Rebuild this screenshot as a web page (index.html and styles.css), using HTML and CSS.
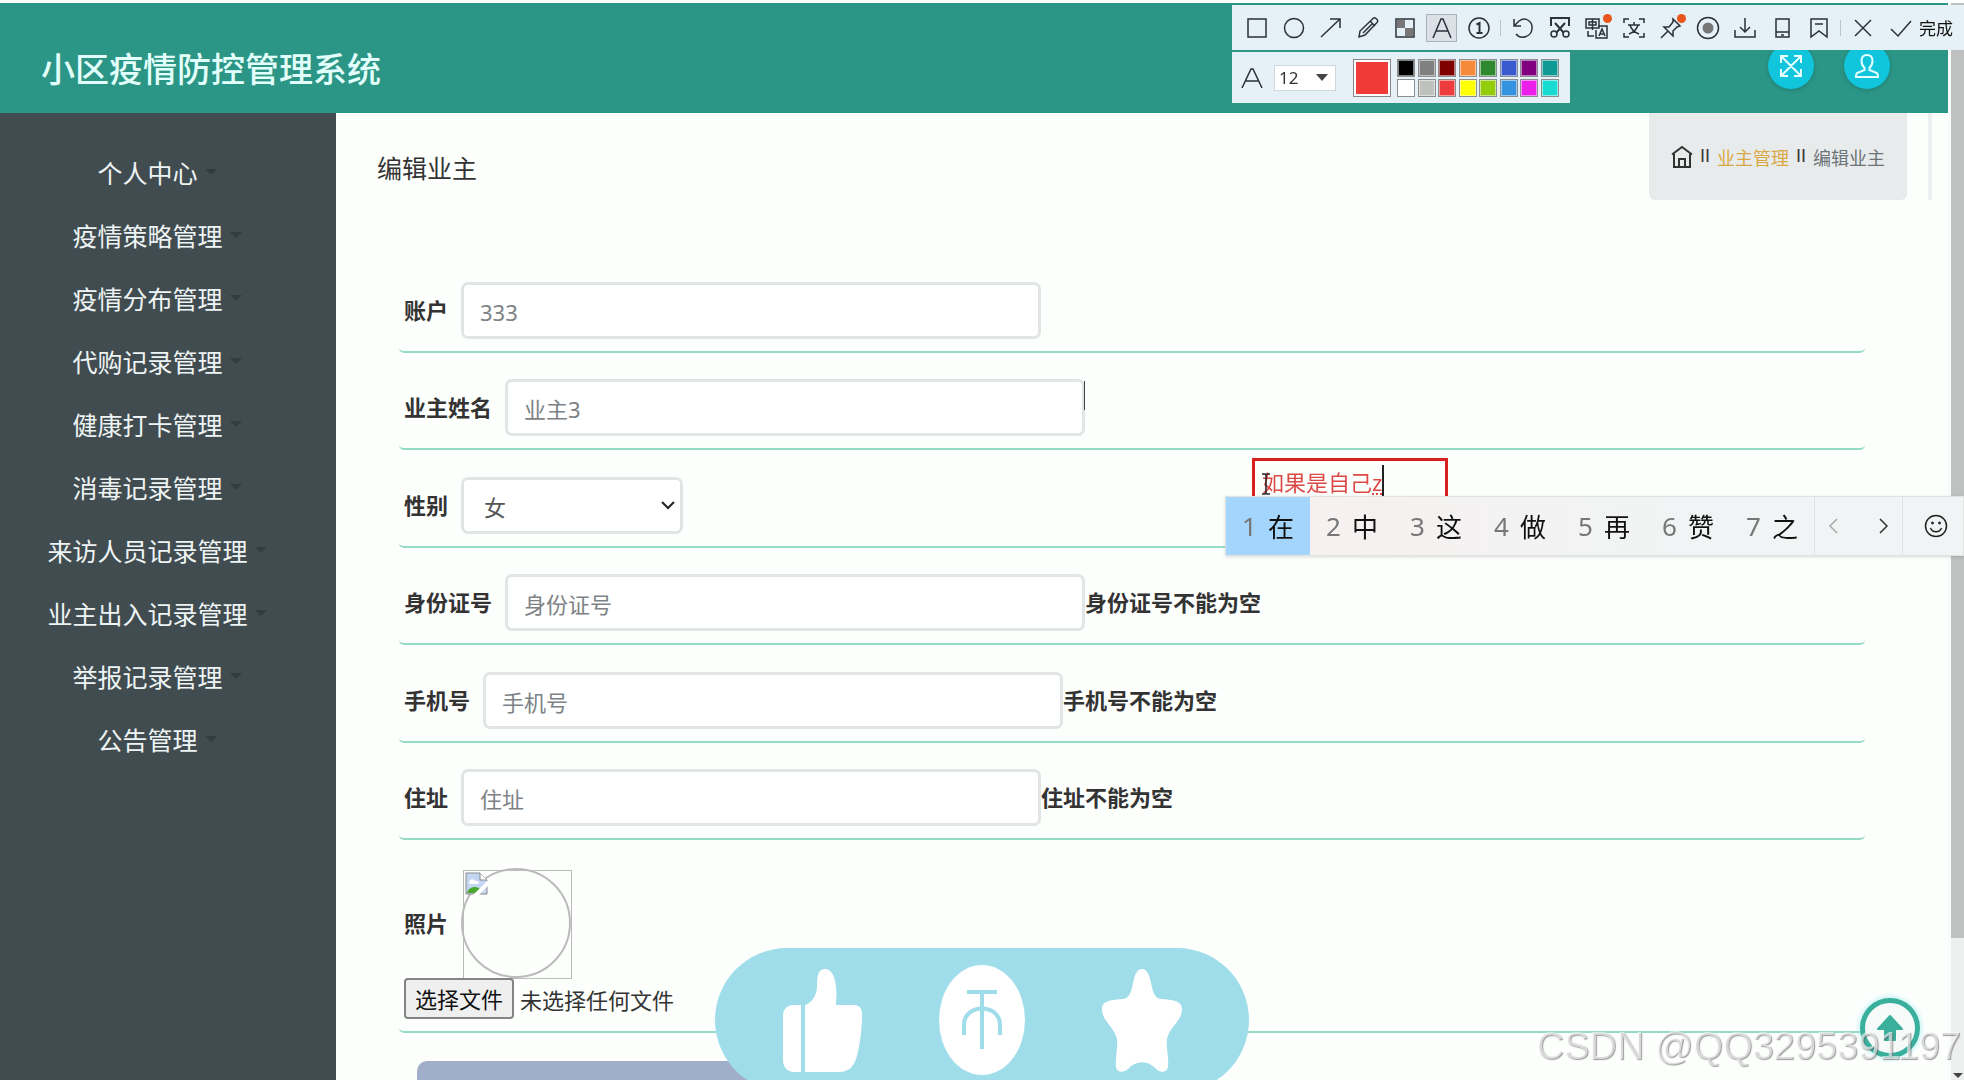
FILE: index.html
```html
<!DOCTYPE html>
<html lang="zh-CN">
<head>
<meta charset="utf-8">
<title>小区疫情防控管理系统</title>
<link rel="stylesheet" href="styles.css">
</head>
<body>
<div class="window">
  <div class="page">
    <header class="header">
      <h1 class="brand">小区疫情防控管理系统</h1>
      <div class="header-actions">
        <button class="round-btn" aria-label="全屏">
          <svg width="24" height="24" viewBox="0 0 24 24" fill="none" stroke="#e6ffff" stroke-width="2"><path d="M3 3l18 18M21 3L3 21M2 9V2h7M15 2h7v7M22 15v7h-7M9 22H2v-7"/></svg>
        </button>
        <button class="round-btn" aria-label="用户">
          <svg width="26" height="26" viewBox="0 0 26 26" fill="none" stroke="#e6ffff" stroke-width="2"><path d="M13 2c-4 0-5.500 3-5.500 6 0 3 1 5 3 7v2L3 20c-1 1-1 2-1 4h22c0-2 0-3-1-4l-7.500-3v-2c2-2 3-4 3-7 0-3-1.500-6-5.500-6z"/></svg>
        </button>
      </div>
    </header>
    <div class="body">
      <nav class="sidebar">
        <a class="nav-item" href="#">个人中心</a>
        <a class="nav-item" href="#">疫情策略管理</a>
        <a class="nav-item" href="#">疫情分布管理</a>
        <a class="nav-item" href="#">代购记录管理</a>
        <a class="nav-item" href="#">健康打卡管理</a>
        <a class="nav-item" href="#">消毒记录管理</a>
        <a class="nav-item" href="#">来访人员记录管理</a>
        <a class="nav-item" href="#">业主出入记录管理</a>
        <a class="nav-item" href="#">举报记录管理</a>
        <a class="nav-item" href="#">公告管理</a>
      </nav>
      <main class="main">
        <div class="title-bar">
          <h2 class="page-title">编辑业主</h2>
          <div class="crumb-wrap">
            <div class="crumbs">
              <svg width="22" height="24" viewBox="0 0 22 24" fill="none" stroke="#333" stroke-width="2"><path d="M1 9.500L11 2l10 7.500M3 9v13h16V9M8 22v-8h6v8"/></svg>
              <span class="crumb-sep">II</span><a class="crumb-link" href="#">业主管理</a><span class="crumb-sep">II</span><span class="crumb-now">编辑业主</span>
            </div>
          </div>
        </div>
        <form class="form">
          <div class="row"><label for="account">账户</label><input class="field" id="account" type="text" placeholder="333"></div>
          <div class="row"><label for="name">业主姓名</label><input class="field" id="name" type="text" placeholder="业主3"></div>
          <div class="row"><label for="sex">性别</label>
            <span class="select-wrap"><select class="field field-select" id="sex"><option>女</option><option>男</option></select>
            <svg width="14" height="10" viewBox="0 0 14 10" fill="none" stroke="#222" stroke-width="2"><path d="M1 1l6 6 6-6"/></svg></span></div>
          <div class="row"><label for="idno">身份证号</label><input class="field" id="idno" type="text" placeholder="身份证号"><span class="error">身份证号不能为空</span></div>
          <div class="row"><label for="phone">手机号</label><input class="field" id="phone" type="text" placeholder="手机号"><span class="error">手机号不能为空</span></div>
          <div class="row"><label for="addr">住址</label><input class="field" id="addr" type="text" placeholder="住址"><span class="error">住址不能为空</span></div>
          <div class="row row-photo">
            <div class="photo-line"><label for="photo">照片</label>
              <svg class="photo" width="112" height="112" viewBox="0 0 112 112" fill="none">
                <rect x="2.500" y="2.500" width="108" height="108" stroke="#bbb"/>
                <circle cx="55" cy="55" r="54" stroke="#bbb" stroke-width="2"/>
                <path d="M5 5h14l7 7v14H5z" fill="#c3d6f2" stroke="#888"/>
                <path d="M19 5v7h7" fill="#fff" stroke="#888"/>
                <path d="M8 15c0-4 4-5 6-2 3-1 5 2 3 3H9z" fill="#fff"/>
                <path d="M6 25c2-7 11-8 15-2l-1 2z" fill="#49a82e"/>
                <path d="M14 28L28 14" stroke="#fff" stroke-width="4"/>
              </svg></div>
            <div class="file-line"><button class="file-btn" type="button">选择文件</button><span>未选择任何文件</span><input id="photo" type="file" hidden></div>
          </div>
          <button class="submit" type="button" aria-label="提交"></button>
        </form>
      </main>
    </div>
  </div>
  <div class="scrollbar"><div class="thumb"></div><div class="track"><i class="scroll-down"></i></div></div>
</div>

<i class="text-caret"></i>

<div class="snip">
  <div class="tools">
    <button aria-label="矩形"><svg viewBox="0 0 24 24"><rect x="3" y="3" width="18" height="18"/></svg></button>
    <button aria-label="椭圆"><svg viewBox="0 0 24 24"><circle cx="12" cy="12" r="9.500"/></svg></button>
    <button aria-label="箭头"><svg viewBox="0 0 24 24"><path d="M2 21L21 3M11 3h10v9"/></svg></button>
    <button aria-label="画笔"><svg viewBox="0 0 24 24"><path d="M3 21l1-6L17 2.500c1-1 2-1 3 0l1 1c1 1 1 2 0 3L9 19zM14 5l5 5M7 17L17 7"/></svg></button>
    <button aria-label="马赛克"><svg viewBox="0 0 24 24"><rect x="3" y="3" width="18" height="18"/><path d="M4 4h8v8H4zM12 12h8v8h-8z" fill="#777" stroke="none"/></svg></button>
    <button class="active" aria-label="文字"><svg viewBox="0 0 24 24"><path d="M3 22L11 3h2l8 19M6 15h12"/></svg></button>
    <button aria-label="序号"><svg viewBox="0 0 24 24"><circle cx="12" cy="12" r="10"/><path d="M9.500 8.500L12.500 7v10M9.500 17h6" stroke-width="2"/></svg></button>
    <i class="sep"></i>
    <button aria-label="撤销"><svg viewBox="0 0 24 24"><path d="M3 3v7h7M3 10l5-5c7-5 14 1 13 8-1 8-11 11-16 5"/></svg></button>
    <button aria-label="裁剪"><svg viewBox="0 0 24 24"><path d="M3 10V2h18v8M7 7l9 10M17 7L8 17" stroke-width="2"/><circle cx="6" cy="18" r="3"/><circle cx="18" cy="18" r="3"/></svg></button>
    <button aria-label="翻译"><svg viewBox="0 0 24 24"><path d="M1 3h13v9H1zM4 6h7v3H4zM7.500 3v11M3 15v5h6M13 10h9v12H11v-8M14 20l3-7 3 7M15 18h4"/></svg><i class="dot"></i></button>
    <button aria-label="识字"><svg viewBox="0 0 24 24"><path d="M2 7V3h5M17 3h5v4M22 17v4h-5M7 21H2v-4M6 9h12M12 6v3M8 9c1 4 4 7 9 9M16 9c-1 4-4 7-9 9"/></svg></button>
    <button aria-label="固定"><svg viewBox="0 0 24 24"><path d="M14 3l7 7-3 1-4 4v5L5 11h5l4-5zM9 15l-7 7M5 11l9 9"/></svg><i class="dot"></i></button>
    <button aria-label="录制"><svg viewBox="0 0 24 24"><circle cx="12" cy="12" r="10.500"/><circle cx="12" cy="12" r="5.500" fill="#777" stroke="none"/></svg></button>
    <button aria-label="下载"><svg viewBox="0 0 24 24"><path d="M12 2v14M7 11l5 5 5-5M2 14v7h20v-7"/></svg></button>
    <button aria-label="手机"><svg viewBox="0 0 24 24"><path d="M6 3h13v18H6zM6 16h13M11 19h3"/></svg></button>
    <button aria-label="收藏"><svg viewBox="0 0 24 24"><path d="M4 3h16v18l-8-6-8 6zM8 8h8"/></svg></button>
    <i class="sep"></i>
    <button aria-label="关闭"><svg viewBox="0 0 24 24"><path d="M4 4l16 16M20 4L4 20"/></svg></button>
    <button class="done"><svg viewBox="0 0 24 24"><path d="M2 13l7 7L22 5"/></svg><span>完成</span></button>
  </div>
  <div class="options">
    <svg class="letter" width="24" height="24" viewBox="0 0 24 24"><path d="M2 22L11 3h2l9 19M6 15h12"/></svg>
    <span class="size-wrap"><select class="size" aria-label="字号"><option>12</option><option>14</option></select><i class="size-arrow"></i></span>
    <i class="current"></i>
    <div class="palette">
      <i class="sw black"></i><i class="sw grey"></i><i class="sw maroon"></i><i class="sw orange"></i><i class="sw green"></i><i class="sw blue"></i><i class="sw purple"></i><i class="sw teal"></i>
      <i class="sw white"></i><i class="sw silver"></i><i class="sw red"></i><i class="sw yellow"></i><i class="sw lime"></i><i class="sw sky"></i><i class="sw pink"></i><i class="sw cyan"></i>
    </div>
  </div>
</div>

<div class="note"><span class="note-text">如果是自己<u>z</u></span>
  <svg class="ibeam" width="10" height="24" viewBox="0 0 10 24" fill="none" stroke="#222" stroke-width="1.500"><path d="M1 2h3l1 1 1-1h3M5 3v18M1 22h3l1-1 1 1h3"/></svg>
</div>

<div class="ime">
  <button class="cand chosen"><span>1</span>在</button>
  <button class="cand"><span>2</span>中</button>
  <button class="cand"><span>3</span>这</button>
  <button class="cand"><span>4</span>做</button>
  <button class="cand"><span>5</span>再</button>
  <button class="cand"><span>6</span>赞</button>
  <button class="cand"><span>7</span>之</button>
  <div class="pager">
    <button aria-label="上一页"><svg width="10" height="16" viewBox="0 0 10 16" fill="none" stroke="#aaa" stroke-width="1.500"><path d="M9 1L2 8l7 7"/></svg></button>
    <button aria-label="下一页"><svg width="10" height="16" viewBox="0 0 10 16" fill="none" stroke="#333" stroke-width="1.500"><path d="M1 1l7 7-7 7"/></svg></button>
  </div>
  <button class="emoji" aria-label="表情"><svg width="24" height="24" viewBox="0 0 24 24" fill="none" stroke="#222" stroke-width="1.500"><circle cx="12" cy="12" r="10.500"/><path d="M6.500 14c2 5 9 5 11 0"/><circle cx="8.500" cy="9" r="1" fill="#222" stroke-width="1"/><circle cx="15.500" cy="9" r="1" fill="#222" stroke-width="1"/></svg></button>
</div>

<div class="dock">
  <div class="pill">
    <svg width="80" height="104" viewBox="0 0 80 104" fill="#fff"><path d="M19 37v67H12C5 104 1 99 1 92V48C1 41 5 37 12 37zM23 104V37c8-3 12-11 12-19C35 6 37 1 43 1s10 7 11 17c1 7 0 12 0 19h17c6 0 9 3 9 9 0 15-2 30-5 42-3 11-9 16-17 16z"/></svg>
    <svg width="86" height="110" viewBox="0 0 86 110"><ellipse cx="43" cy="55" rx="43" ry="55" fill="#fff"/><path d="M28 27h30M43 27v57M25 70V60c0-22 36-22 36 0v10" fill="none" stroke="#9fddeb" stroke-width="4"/></svg>
    <svg width="80" height="104" viewBox="0 0 80 104" fill="#fff"><path d="M40 1c5 0 7 5 9 14 2 10 4 16 11 16 9 1 20 1 20 10 0 12-12 17-15 30-1 9 2 19 1 28-1 6-8 6-12 2-8-9-20-9-28 0-4 4-11 4-12-2-1-9 2-19 1-28C12 58 0 53 0 41c0-9 11-9 20-10 7 0 9-6 11-16 2-9 4-14 9-14z"/></svg>
  </div>
</div>

<button class="to-top" aria-label="返回顶部"><svg width="28" height="28" viewBox="0 0 28 28" fill="#3aaf9c" stroke="#3aaf9c" stroke-width="2" stroke-linejoin="round"><path d="M14 2L26 15h-7v11H9V15H2z"/></svg></button>
<div class="watermark">CSDN @QQ3295391197</div>
</body>
</html>
```
FILE: styles.css
```css
* { box-sizing: border-box; }
body { margin: 0; height: 100vh; overflow: hidden; background: #fdfffd; color: #333; font-family: "Noto Sans", "Noto Sans CJK SC", sans-serif; font-size: 22px; }
button { border: 0; padding: 0; background: none; font: inherit; color: inherit; display: flex; align-items: center; justify-content: center; }
a { text-decoration: none; }

.window { display: flex; height: 100vh; padding-top: 3px; overflow: hidden; }
.page { flex: 1; display: flex; flex-direction: column; min-width: 0; overflow: hidden; }

.header { flex: none; height: 110px; padding: 16px 58px 0 41px; display: flex; align-items: center; justify-content: space-between; background: #2c9686; }
.brand { margin: 0; padding-top: 6px; font-size: 34px; font-weight: 500; line-height: 48px; color: #e2fffb; }
.header-actions { display: flex; gap: 30px; }
.round-btn { width: 46px; height: 46px; border-radius: 50%; background: #10c5dc; box-shadow: 0 1px 4px rgba(0, 60, 60, .3); }

.body { flex: 1; display: flex; min-height: 0; }
.sidebar { flex: none; width: 336px; padding: 27px 22px 0 0; display: flex; flex-direction: column; align-items: center; background: #414c50; }
.nav-item { display: flex; align-items: center; gap: 7px; height: 63px; font-size: 25px; color: #eef4f4; white-space: nowrap; }
.nav-item::after { content: ""; border: 6px solid transparent; border-top-color: #313d40; border-bottom: 0; }

.main { flex: 1; min-width: 0; }
.title-bar { display: flex; justify-content: space-between; padding-left: 41px; }
.page-title { margin: 37px 0 0; font-size: 25px; font-weight: 400; line-height: 36px; }
.crumb-wrap { padding-right: 21px; margin-right: 16px; border-right: 4px solid #eceef0; }
.crumbs { display: flex; align-items: center; gap: 7px; width: 258px; height: 87px; padding-left: 22px; border-radius: 0 0 6px 6px; background: #e8ebec; font-size: 18px; white-space: nowrap; }
.crumb-sep { font-family: "Liberation Sans", sans-serif; }
.crumb-link { color: #d9a843; }
.crumb-now { color: #6c7478; }

.form { margin: 55px 83px 0 63px; }
.row { display: flex; align-items: center; padding: 27px 5px 12px; border-bottom: 2px solid #94dcc6; border-radius: 5px; white-space: nowrap; }
.row:nth-child(even) { padding-top: 26px; }
.row label { margin-right: 13px; padding-bottom: 3px; font-weight: 700; }
.error { padding-bottom: 3px; font-weight: 700; }
.field { width: 580px; height: 57px; padding: 2px 16px 0; border: 3px solid #e1e5e5; border-radius: 7px; background: #fefffe; font: inherit; color: #555; outline: 0; }
.field::placeholder { color: #7d8286; opacity: 1; }
.select-wrap { display: grid; align-items: center; }
.select-wrap > * { grid-area: 1 / 1; }
.select-wrap svg { justify-self: end; margin-right: 8px; pointer-events: none; }
.field-select { width: 222px; padding-left: 20px; appearance: none; }
.row-photo { display: block; padding-top: 28px; }
.photo-line { display: flex; align-items: center; }
.photo { margin-bottom: -2px; }
.file-line { display: flex; align-items: center; gap: 6px; }
.file-btn { width: 110px; height: 41px; padding-bottom: 2px; border: 2px solid #848484; border-radius: 4px; background: #efefef; color: #111; }
.submit { width: 600px; height: 60px; margin: 28px 0 0 18px; border-radius: 10px; background: #a0aec9; }

.scrollbar { flex: none; width: 16px; display: flex; flex-direction: column; border-left: 3px solid #fafbfb; background: #eeefef; }
.thumb { flex: 87; background: #bfc1c0; }
.track { flex: 13; display: flex; align-items: flex-end; justify-content: center; padding-bottom: 2px; }
.scroll-down { border: 5px solid transparent; border-top-color: #444; border-bottom: 0; }

/* screen-capture toolbar floating over the page */
.snip { position: fixed; top: 5px; right: 0; width: 732px; }
.tools { display: flex; align-items: center; height: 45px; padding-left: 6px; background: #e6f0f7; }
.tools button { flex: none; position: relative; width: 37px; height: 28px; }
.tools svg, .letter { flex: none; width: 24px; height: 24px; fill: none; stroke: #2a3138; stroke-width: 1.5; }
.tools .active { width: 31px; margin: 0 3px; border: 1px solid #a9b2ba; background: #dbe1e6; }
.tools .done { width: auto; padding-left: 8px; gap: 6px; font-size: 17px; color: #111; }
.sep { flex: none; width: 1px; height: 16px; margin: 0 3px; background: #b9c3cb; }
.dot { position: absolute; top: 0; right: 3px; width: 9px; height: 9px; border-radius: 50%; background: #e8561e; }
.options { display: flex; align-items: center; width: 338px; height: 51px; margin-top: 2px; padding-left: 8px; background: #e6f0f7; }
.size-wrap { display: grid; align-items: center; margin: 0 17px 0 10px; }
.size-wrap > * { grid-area: 1 / 1; }
.size { width: 62px; height: 26px; padding: 0 4px; border: 1px solid #cfd8de; background: #fff; appearance: none; font: inherit; font-size: 17px; line-height: 22px; color: #333; }
.size-arrow { justify-self: end; margin-right: 8px; border: 6px solid transparent; border-top: 7px solid #444; border-bottom: 0; pointer-events: none; }
.current { width: 38px; height: 38px; border: 1px solid #888; box-shadow: inset 0 0 0 2px #fff; background: #f03a37; }
.palette { display: grid; grid-template-columns: repeat(8, 18px); justify-content: space-between; row-gap: 2px; width: 162px; margin-left: 6px; }
.sw { height: 18px; border: 1px solid #8b8f92; box-shadow: inset 0 0 0 1px rgba(255, 255, 255, .5); }
.black { background: #000; } .grey { background: #808080; } .maroon { background: #800000; } .orange { background: #f58a3a; }
.green { background: #2f8a2f; } .blue { background: #3a5bd0; } .purple { background: #800080; } .teal { background: #0f9a96; }
.white { background: #fff; } .silver { background: #bfc1bd; } .red { background: #ee3b3b; } .yellow { background: #ff0; }
.lime { background: #94cc0c; } .sky { background: #3593e0; } .pink { background: #ec1eea; } .cyan { background: #18dcd2; }

.text-caret { position: fixed; left: 1084px; top: 381px; width: 1px; height: 29px; background: #444; }

/* annotation being typed, with the input method's candidate bar below */
.note { position: fixed; top: 458px; right: 516px; width: 196px; height: 60px; padding: 4px 7px; border: 3px solid #d8201f; }
.note-text { display: inline-block; border-right: 2px solid #222; line-height: 34px; color: #dc4a48; }
.note-text u { text-decoration-style: dotted; }
.ibeam { position: absolute; left: 6px; top: 11px; }
.ime { position: fixed; top: 496px; right: 0; width: 739px; height: 60px; display: flex; border: 1px solid #dfe3e2; background: linear-gradient(90deg, #f8efef, #f1f4f4 60%); box-shadow: 0 1px 3px rgba(0, 0, 0, .15); }
.cand { width: 84px; gap: 11px; font-size: 26px; color: #111; }
.cand span { color: #777; }
.chosen { background: #a4d5fc; }
.pager { display: flex; justify-content: space-around; width: 89px; border: solid #dde1e1; border-width: 0 1px; }
.pager button { flex: 1; }
.pager button:first-child { padding-right: 8px; }
.pager button:last-child { padding-left: 8px; }
.emoji { flex: 1; padding-left: 6px; }

.dock { position: fixed; left: 0; right: 0; bottom: -12px; display: flex; justify-content: center; pointer-events: none; }
.pill { display: flex; align-items: center; justify-content: space-between; width: 534px; height: 144px; padding: 0 67px; border-radius: 72px; background: #9fddeb; }

.to-top { position: fixed; right: 44px; bottom: 22px; width: 60px; height: 60px; border: 5px solid #3aaf9c; border-radius: 50%; background: #f6fbfa; box-shadow: 0 0 6px #9fe8ee; }
.watermark { position: fixed; right: 3px; bottom: 12px; font: 38px/44px "Liberation Sans", sans-serif; color: rgba(255, 255, 255, .6); text-shadow: 1px 1px 1px rgba(90, 90, 90, .6); white-space: nowrap; }
```
